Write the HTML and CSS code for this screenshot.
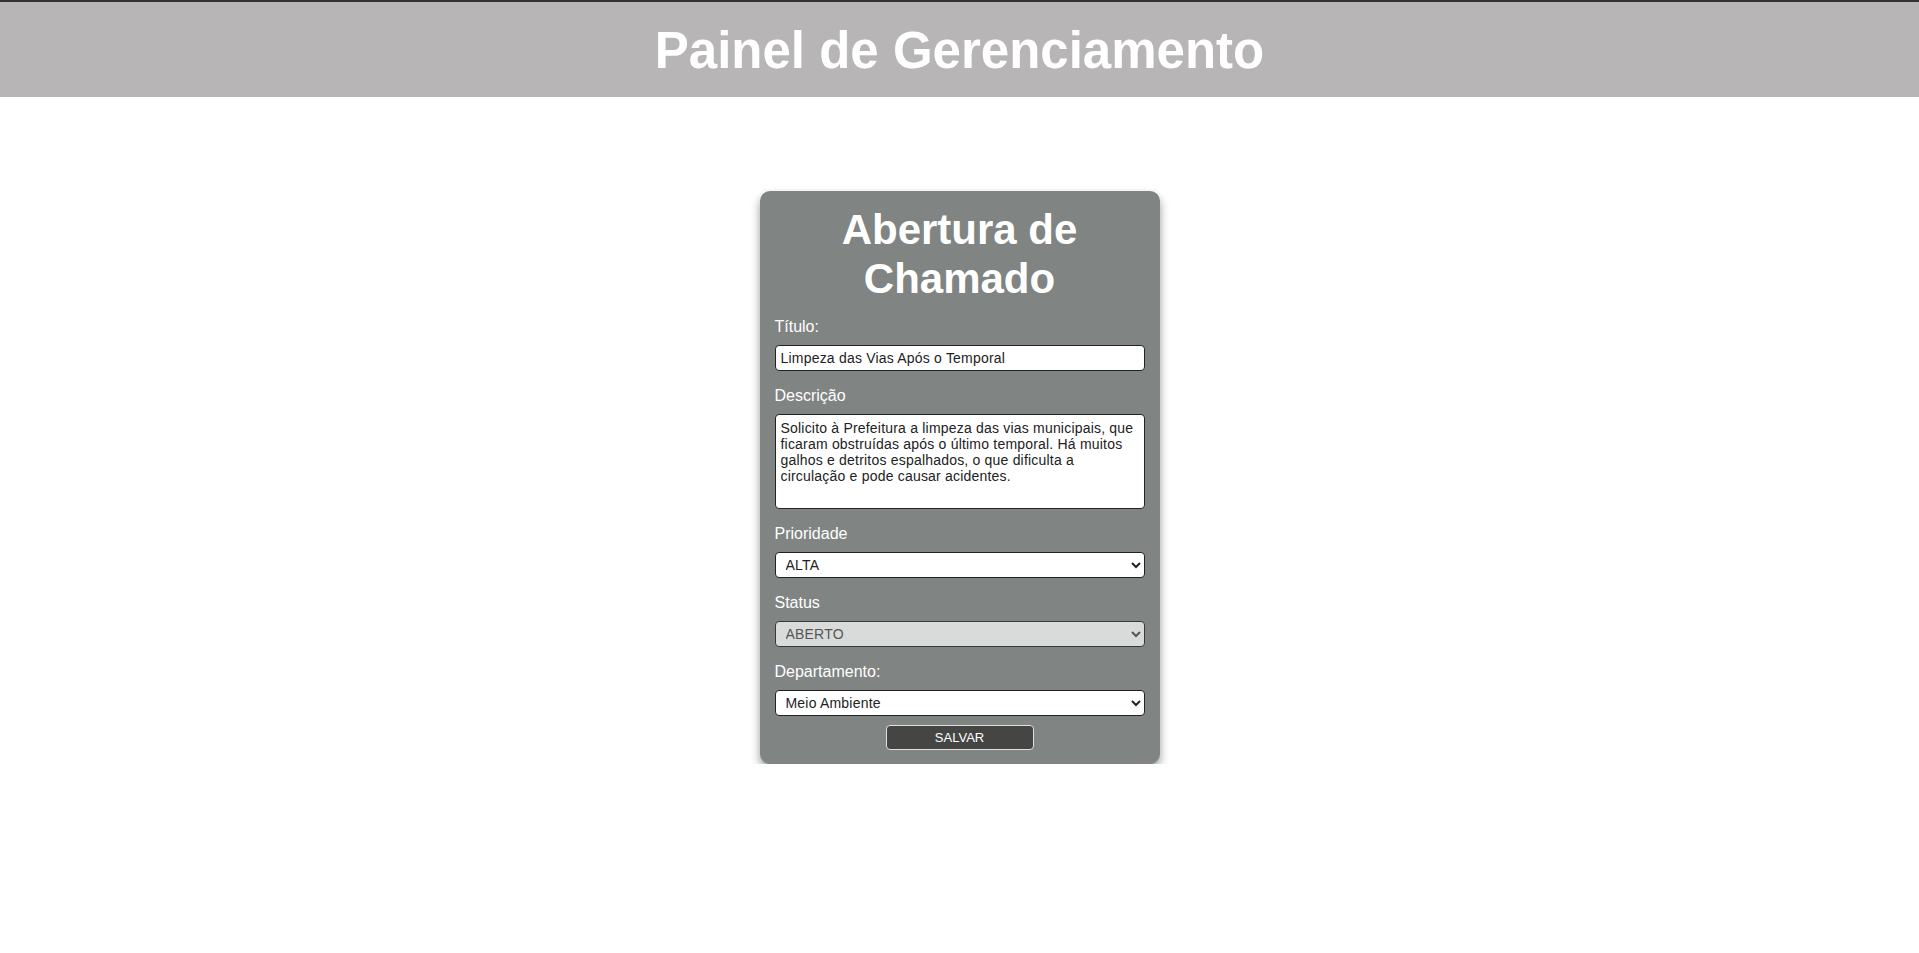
FILE: index.html
```html
<!DOCTYPE html>
<html lang="pt-BR">
<head>
<meta charset="utf-8">
<title>Painel de Gerenciamento</title>
<link rel="stylesheet" href="styles.css">
</head>
<body>
<header class="topbar">
  <h1 class="topbar-title">Painel de Gerenciamento</h1>
</header>
<main class="page">
  <form class="card">
    <h2 class="card-title">Abertura de Chamado</h2>
    <div class="field">
      <label class="label" for="titulo">Título:</label>
      <input class="control" id="titulo" type="text" value="Limpeza das Vias Após o Temporal">
    </div>
    <div class="field">
      <label class="label" for="descricao">Descrição</label>
      <textarea class="control area" id="descricao">Solicito à Prefeitura a limpeza das vias municipais, que ficaram obstruídas após o último temporal. Há muitos galhos e detritos espalhados, o que dificulta a circulação e pode causar acidentes.</textarea>
    </div>
    <div class="field">
      <label class="label" for="prioridade">Prioridade</label>
      <select class="control select" id="prioridade">
        <option>ALTA</option>
        <option>MÉDIA</option>
        <option>BAIXA</option>
      </select>
    </div>
    <div class="field">
      <label class="label" for="status">Status</label>
      <select class="control select" id="status" disabled>
        <option>ABERTO</option>
      </select>
    </div>
    <div class="field last">
      <label class="label" for="departamento">Departamento:</label>
      <select class="control select" id="departamento">
        <option>Meio Ambiente</option>
        <option>Obras</option>
      </select>
    </div>
    <button class="save" type="button">SALVAR</button>
  </form>
</main>
</body>
</html>
```
FILE: styles.css
```css
html, body {
  margin: 0;
  padding: 0;
  background: #ffffff;
  font-family: "Liberation Sans", Arial, sans-serif;
}

.topbar {
  border-top: 2px solid #333333;
  background: #b7b5b6;
  height: 95px;
  display: flex;
  align-items: center;
  justify-content: center;
}

.topbar-title {
  margin: 0;
  color: #ffffff;
  font-size: 51px;
  font-weight: bold;
  line-height: 1;
  padding-top: 1px;
}

.page {
  display: flex;
  justify-content: center;
  padding-top: 94px;
}

.card {
  width: 400px;
  box-sizing: border-box;
  background: #808483;
  border-radius: 10px;
  padding: 15px 15px 14px;
  box-shadow: 0 5px 10px rgba(0, 0, 0, 0.4);
  display: flex;
  flex-direction: column;
}

.card-title {
  margin: 0 0 15px;
  text-align: center;
  color: #ffffff;
  font-size: 42px;
  font-weight: bold;
  line-height: 48.5px;
}

.field {
  display: flex;
  flex-direction: column;
  margin-bottom: 16px;
}

.field.last {
  margin-bottom: 9px;
}

.label {
  color: #ffffff;
  font-size: 16px;
  line-height: 18px;
  margin-bottom: 9px;
}

.control {
  box-sizing: border-box;
  width: 100%;
  height: 26px;
  margin: 0;
  border: 1px solid #222222;
  border-radius: 4px;
  background: #ffffff;
  color: #222222;
  font-family: "Liberation Sans", Arial, sans-serif;
  font-size: 14px;
  line-height: 16px;
  letter-spacing: 0.2px;
  padding: 4px 5px;
}

.area {
  height: 95px;
  padding: 5px 5px;
  resize: none;
}

.select {
  padding: 3px 4px 3px 6px;
}

.select:disabled {
  background: #d9dbda;
  color: #555555;
  border-color: #3a3a3a;
  opacity: 1;
}

.save {
  align-self: center;
  width: 148px;
  height: 25px;
  box-sizing: border-box;
  background: #454644;
  color: #ffffff;
  border: 1px solid #e0e0e0;
  border-radius: 4px;
  font-family: "Liberation Sans", Arial, sans-serif;
  font-size: 13px;
  padding: 0;
}
```
